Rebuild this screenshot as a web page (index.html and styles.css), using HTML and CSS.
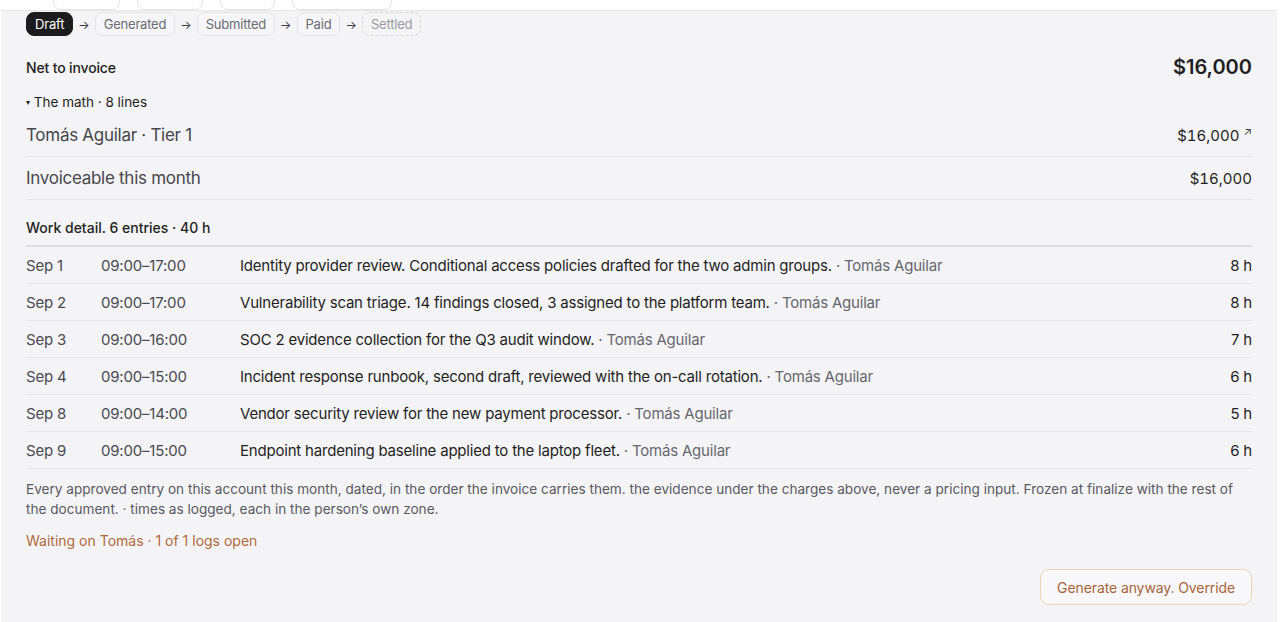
FILE: index.html
```html
<!DOCTYPE html>
<html lang="en">
<head>
    <meta charset="UTF-8">
    <meta name="viewport" content="width=device-width, initial-scale=1.0">
    <title>Invoice draft</title>
    <link rel="stylesheet" href="styles.css">
</head>
<body>
    <div class="toolbar">
        <span class="tool-btn tb-1"></span>
        <span class="tool-btn tb-2"></span>
        <span class="tool-btn tb-3"></span>
        <span class="tool-btn tb-4"></span>
    </div>

    <div class="panel">
        <div class="stepper">
            <span class="step active">Draft</span>
            <span class="step-arrow">&rarr;</span>
            <span class="step">Generated</span>
            <span class="step-arrow">&rarr;</span>
            <span class="step">Submitted</span>
            <span class="step-arrow">&rarr;</span>
            <span class="step">Paid</span>
            <span class="step-arrow">&rarr;</span>
            <span class="step pending">Settled</span>
        </div>

        <div class="net-row">
            <span class="net-label">Net to invoice</span>
            <span class="net-total">$16,000</span>
        </div>

        <div class="math-toggle"><span class="caret">&#9662;</span> The math · 8 lines</div>

        <div class="math-lines">
            <div class="math-line">
                <span>Tomás Aguilar · Tier 1</span>
                <span class="amount">$16,000 <span class="ext">&#8599;</span></span>
            </div>
            <div class="math-line">
                <span>Invoiceable this month</span>
                <span class="amount">$16,000</span>
            </div>
        </div>

        <div class="work-title">Work detail. 6 entries · 40 h</div>

        <div class="work-table">
            <div class="work-row">
                <span class="w-date">Sep 1</span>
                <span class="w-time">09:00–17:00</span>
                <span class="w-desc">Identity provider review. Conditional access policies drafted for the two admin groups. <span class="who">· Tomás Aguilar</span></span>
                <span class="w-hours">8 h</span>
            </div>
            <div class="work-row">
                <span class="w-date">Sep 2</span>
                <span class="w-time">09:00–17:00</span>
                <span class="w-desc">Vulnerability scan triage. 14 findings closed, 3 assigned to the platform team. <span class="who">· Tomás Aguilar</span></span>
                <span class="w-hours">8 h</span>
            </div>
            <div class="work-row">
                <span class="w-date">Sep 3</span>
                <span class="w-time">09:00–16:00</span>
                <span class="w-desc">SOC 2 evidence collection for the Q3 audit window. <span class="who">· Tomás Aguilar</span></span>
                <span class="w-hours">7 h</span>
            </div>
            <div class="work-row">
                <span class="w-date">Sep 4</span>
                <span class="w-time">09:00–15:00</span>
                <span class="w-desc">Incident response runbook, second draft, reviewed with the on-call rotation. <span class="who">· Tomás Aguilar</span></span>
                <span class="w-hours">6 h</span>
            </div>
            <div class="work-row">
                <span class="w-date">Sep 8</span>
                <span class="w-time">09:00–14:00</span>
                <span class="w-desc">Vendor security review for the new payment processor. <span class="who">· Tomás Aguilar</span></span>
                <span class="w-hours">5 h</span>
            </div>
            <div class="work-row">
                <span class="w-date">Sep 9</span>
                <span class="w-time">09:00–15:00</span>
                <span class="w-desc">Endpoint hardening baseline applied to the laptop fleet. <span class="who">· Tomás Aguilar</span></span>
                <span class="w-hours">6 h</span>
            </div>
        </div>

        <p class="work-note">Every approved entry on this account this month, dated, in the order the invoice carries them. the evidence under the charges above, never a pricing input. Frozen at finalize with the rest of the document. · times as logged, each in the person’s own zone.</p>

        <div class="waiting">Waiting on Tomás · 1 of 1 logs open</div>

        <div class="actions">
            <button class="override-btn">Generate anyway. Override</button>
        </div>
    </div>
</body>
</html>
```

FILE: styles.css
```css
* {
    margin: 0;
    padding: 0;
    box-sizing: border-box;
}

body {
    font-family: Inter, 'Noto Sans', sans-serif;
    background: #fff;
    color: #1f1f22;
    width: 1280px;
    height: 622px;
    overflow: hidden;
}

/* toolbar is scrolled mostly out of view, only its bottom edge peeks in */
.toolbar {
    display: flex;
    align-items: flex-end;
    gap: 17px;
    padding-left: 53px;
    height: 32px;
    margin-top: -22px;
}

.tool-btn {
    height: 30px;
    border: 1px solid #e4e4e7;
    border-radius: 8px;
    background: #fff;
}

.tb-1 { width: 67px; }
.tb-2 { width: 66px; }
.tb-3 { width: 55px; }
.tb-4 { width: 100px; }

.panel {
    margin: 0 3px 0 1px;
    background: #f4f4f6;
    border-top: 1px solid #e6e6e9;
    padding: 1px 25px 0 25px;
    height: 612px;
}

.stepper {
    display: flex;
    align-items: center;
    gap: 5px;
    height: 24px;
}

.step {
    font-size: 13px;
    letter-spacing: -0.2px;
    color: #6b6b72;
    height: 24px;
    line-height: 22px;
    padding: 0 8px;
    border: 1px solid #e3e3e7;
    border-radius: 8px;
    background: #f6f6f8;
}

.step.active {
    background: #1c1c1e;
    border-color: #1c1c1e;
    color: #fff;
}

.step.pending {
    border-style: dashed;
    border-color: #d6d6db;
    color: #9a9aa1;
    background: transparent;
}

.step-arrow {
    font-size: 12px;
    color: #3a3a3f;
}

.net-row {
    display: flex;
    justify-content: space-between;
    align-items: center;
    margin-top: 18px;
    height: 26px;
}

.net-label {
    font-size: 14px;
    font-weight: 500;
    letter-spacing: -0.15px;
}

.net-total {
    font-size: 20px;
    font-weight: 600;
}

.math-toggle {
    font-size: 13.5px;
    margin-top: 13px;
    height: 18px;
    line-height: 18px;
}

.caret {
    font-size: 8px;
    vertical-align: 2px;
}

.math-lines {
    margin-top: 3px;
}

.math-line {
    display: flex;
    justify-content: space-between;
    align-items: center;
    height: 43px;
    font-size: 17px;
    letter-spacing: -0.28px;
    color: #46464c;
    border-bottom: 1px solid #e4e4e7;
}

.math-line .amount {
    font-size: 15px;
    letter-spacing: 0;
    font-variant-numeric: tabular-nums;
    color: #1f1f22;
}

.ext {
    font-size: 11px;
    vertical-align: 5px;
    color: #3a3a3f;
}

.work-title {
    font-size: 14px;
    font-weight: 500;
    margin-top: 19px;
    padding-bottom: 9px;
    border-bottom: 2px solid #dddde1;
}

.work-row {
    display: flex;
    align-items: center;
    height: 37px;
    font-size: 15px;
    letter-spacing: -0.2px;
    color: #1f1f22;
    border-bottom: 1px solid #e6e6e9;
}

.w-date {
    width: 75px;
    color: #4a4a50;
}

.w-time {
    width: 139px;
    color: #4a4a50;
}

.w-desc {
    flex: 1;
}

.who {
    color: #66666d;
}

.w-hours {
    text-align: right;
}

.work-note {
    font-size: 13.6px;
    line-height: 20px;
    color: #58585f;
    margin-top: 10px;
}

.waiting {
    font-size: 14px;
    color: #b0693a;
    margin-top: 13px;
}

.actions {
    display: flex;
    justify-content: flex-end;
    margin-top: 20px;
}

.override-btn {
    font-family: inherit;
    font-size: 14px;
    letter-spacing: -0.1px;
    color: #a8643a;
    background: #f8f8fa;
    border: 1px solid #ead3b6;
    border-radius: 9px;
    height: 36px;
    padding: 0 16px;
}
```
